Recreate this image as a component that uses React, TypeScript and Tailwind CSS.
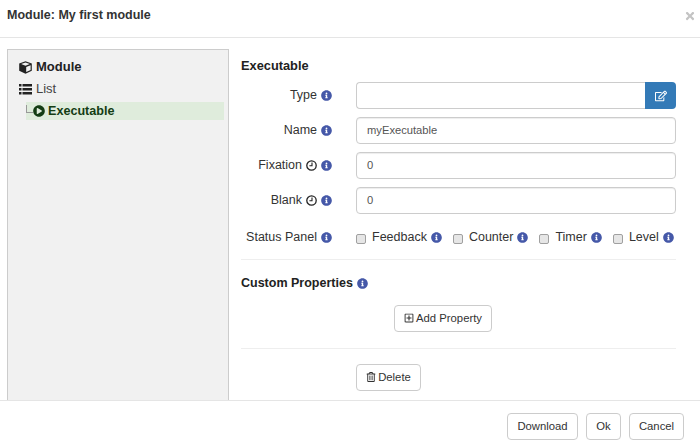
import { type ReactNode } from "react";
import {
  FaInfoCircle,
  FaPlayCircle,
  FaRegEdit,
  FaRegPlusSquare,
  FaRegTrashAlt,
  FaTimes,
} from "react-icons/fa";

function Info({ className = "" }: { className?: string }) {
  return <FaInfoCircle className={`shrink-0 text-[#4558a8] ${className}`} size={11} />;
}

function Clock() {
  return (
    <svg width="11" height="11" viewBox="0 0 11 11" className="shrink-0" fill="none" stroke="#222">
      <circle cx="5.5" cy="5.5" r="4.7" strokeWidth="1.3" />
      <path d="M6 2.6v3.2H3.4" strokeWidth="1.1" />
    </svg>
  );
}

function CubeIcon() {
  return (
    <svg width="13" height="13" viewBox="0 0 13 13" className="shrink-0">
      <path d="M6.5 0.3 12.8 2.6V9.8L6.5 12.8 0.2 9.8V2.6Z" fill="#222" />
      <path d="M6.5 1.6 10.8 3.1 6.5 4.8 2.2 3.1Z" fill="#f1f1f1" />
      <path d="M7.2 6 11.6 4.2V9L7.2 11.1Z" fill="#f1f1f1" />
    </svg>
  );
}

function ListIcon() {
  return (
    <svg width="13" height="11" viewBox="0 0 13 11" className="shrink-0" fill="#222">
      <path d="M0 0h2.5v2.5H0zM3.5 0H13v2.5H3.5zM0 4h2.5v2.5H0zM3.5 4H13v2.5H3.5zM0 8h2.5v2.5H0zM3.5 8H13v2.5H3.5z" />
    </svg>
  );
}

function Label({ children, timed }: { children: ReactNode; timed?: boolean }) {
  return (
    <div className="flex w-[91px] shrink-0 items-center justify-end gap-1 whitespace-nowrap text-[12.5px] text-[#333]">
      {children}
      {timed && <Clock />}
      <Info />
    </div>
  );
}

function Field({ label, value, timed }: { label: string; value: string; timed?: boolean }) {
  return (
    <div className="flex items-center gap-[24px]">
      <Label timed={timed}>{label}</Label>
      <div className="flex h-[27px] w-[320px] items-center rounded border border-[#ccc] bg-white px-[10px] text-[11.2px] text-[#555] shadow-[inset_0_1px_1px_rgba(0,0,0,0.075)]">
        {value}
      </div>
    </div>
  );
}

function Check({ label }: { label: string }) {
  return (
    <label className="flex items-center text-[12.5px] text-[#333]">
      <input
        type="checkbox"
        className="mr-[6px] mt-[3px] h-[10px] w-[10px] appearance-none rounded-[2px] border border-[#a0a0a0] bg-[#e6e6e6]"
      />
      {label}
      <Info className="ml-1" />
    </label>
  );
}

function Button({ children, className = "" }: { children: ReactNode; className?: string }) {
  return (
    <button className={`flex h-[27px] items-center justify-center gap-[2px] rounded border border-[#ccc] bg-white text-[11.3px] text-[#333] ${className}`}>
      {children}
    </button>
  );
}

export default function App() {
  return (
    <div className="flex h-[446px] w-[700px] flex-col overflow-hidden bg-white font-['Liberation_Sans',sans-serif]">
      <header className="flex h-[38px] shrink-0 items-center justify-between border-b border-[#e5e5e5] pb-[6px] pl-[7px] pr-[4px]">
        <h1 className="text-[12.5px] font-bold text-[#333]">Module: My first module</h1>
        <FaTimes className="text-[#c4c4c4]" size={12} />
      </header>

      <div className="flex min-h-0 flex-1 pl-[7px] pt-[11px]">
        <aside className="w-[222px] shrink-0 border border-b-0 border-[#ccc] bg-[#f1f1f1] pr-[4px] pt-[7px] text-[13px] text-[#333]">
          <div className="flex h-[20px] items-center gap-[4px] pl-[11px] font-bold text-[#222]">
            <CubeIcon />
            Module
          </div>
          <div className="mt-[2px] flex h-[20px] items-center gap-[4px] pl-[11px] text-[#444]">
            <ListIcon />
            List
          </div>
          <div className="ml-[18px] mt-[3px] flex h-[18px] items-center bg-[#dfecdc] font-bold text-[#143d14]">
            <span className="mb-[5px] h-[8px] w-[7px] shrink-0 border-b border-l border-[#999]" />
            <FaPlayCircle size={12} className="shrink-0" />
            <span className="ml-[3px] text-[12.6px]">Executable</span>
          </div>
        </aside>

        <main className="ml-[12px] w-[435px] pt-[10px]">
          <h2 className="text-[12.8px] font-bold leading-[14px] text-[#222]">Executable</h2>

          <div className="mt-[9px] flex flex-col gap-[8px]">
            <div className="flex items-center gap-[24px]">
              <Label>Type</Label>
              <div className="flex h-[27px] w-[320px]">
                <div className="min-w-0 flex-1 rounded-l border border-r-0 border-[#ccc] bg-white" />
                <div className="flex w-[31px] items-center justify-center rounded-r bg-[#337ab7] text-white">
                  <FaRegEdit size={12} />
                </div>
              </div>
            </div>
            <Field label="Name" value="myExecutable" />
            <Field label="Fixation" value="0" timed />
            <Field label="Blank" value="0" timed />
          </div>

          <div className="mt-[15px] flex h-[16px] items-center">
            <div className="flex w-[91px] shrink-0 items-center justify-end gap-1 whitespace-nowrap text-[12.5px] text-[#333]">
              Status Panel
              <Info />
            </div>
            <div className="ml-[24px] flex flex-1 items-center gap-[11px]">
              <Check label="Feedback" />
              <Check label="Counter" />
              <Check label="Timer" />
              <Check label="Level" />
            </div>
          </div>

          <hr className="mt-[14px] border-[#eee]" />

          <div className="mt-[14px] flex items-center gap-1 text-[12.5px] font-bold text-[#222]">
            Custom Properties
            <Info />
          </div>

          <div className="mt-[12px] pl-[153px]">
            <Button className="w-[98px]">
              <FaRegPlusSquare size={10} />
              Add Property
            </Button>
          </div>

          <hr className="mt-[16px] border-[#eee]" />

          <div className="mt-[15px] pl-[115px]">
            <Button className="w-[65px]">
              <FaRegTrashAlt size={10} />
              Delete
            </Button>
          </div>
        </main>
      </div>

      <footer className="flex h-[46px] shrink-0 items-center justify-end gap-[8px] border-t border-[#e5e5e5] pr-[16px] pt-[5px]">
        <Button className="w-[71px]">Download</Button>
        <Button className="w-[35px]">Ok</Button>
        <Button className="w-[55px]">Cancel</Button>
      </footer>
    </div>
  );
}
